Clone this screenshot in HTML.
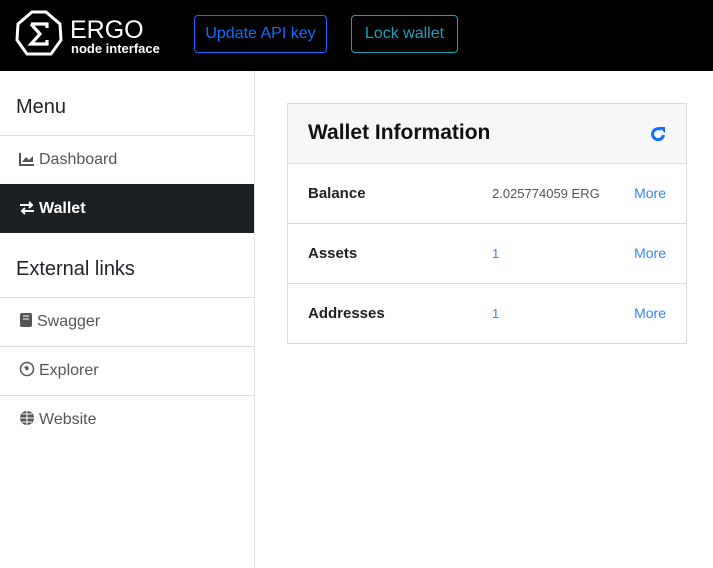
<!DOCTYPE html>
<html><head><style>
*{box-sizing:border-box;margin:0;padding:0}
body{width:713px;height:568px;overflow:hidden;font-family:"Liberation Sans",sans-serif;background:#fff;position:relative}
.hdr{position:absolute;left:0;top:0;width:713px;height:71px;background:#000}
.btn{position:absolute;top:15px;height:38px;border:1px solid;border-radius:4px;font-size:16px;line-height:36px;text-align:center}
.side{position:absolute;left:0;top:71px;width:255px;height:497px;border-right:1px solid #e5e5e5}
.h{position:absolute;left:16px;font-size:20px;color:#212529}
.it{position:absolute;left:0;width:254px;height:49px;border-top:1px solid #dedede;font-size:16px;color:#555;line-height:48px;padding-left:19px}
.it svg{vertical-align:-2px;margin-right:4px}
.card{position:absolute;left:287px;top:103px;width:400px;height:241px;border:1px solid #dcdcdc}
.ch{height:60px;background:#f7f7f7;border-bottom:1px solid #dcdcdc;font-size:21px;font-weight:bold;line-height:58px;padding-left:20px;color:#111;position:relative}
.row{height:60px;border-bottom:1px solid #dcdcdc;position:relative;font-size:16px;line-height:59px;color:#222}
.row:last-child{border-bottom:none}
.row .l{position:absolute;left:20px;font-weight:bold;font-size:15px}
.row .v{position:absolute;left:204px;font-size:13px;color:#555}
.row .m{position:absolute;right:20px;font-size:14px;color:#3b82f6}
</style></head><body>
<div class="hdr">
<svg style="position:absolute;left:15px;top:10px" width="48" height="48" viewBox="0 0 48 48"><polygon points="17,2 31,2 45,14 46,30 36,44 12,44 2,30 3,14" fill="none" stroke="#fff" stroke-width="3"/><path d="M16 14h16v4M16 14l9 10-9 10h16v-4" fill="none" stroke="#fff" stroke-width="3.2"/></svg>
<div style="position:absolute;left:70px;top:17px;color:#fff;font-size:25px;line-height:26px">ERGO</div>
<div style="position:absolute;left:71px;top:42px;color:#fff;font-size:13px;font-weight:bold;line-height:14px">node interface</div>
<div class="btn" style="left:194px;width:133px;border-color:#0d6efd;color:#0d6efd">Update API key</div>
<div class="btn" style="left:351px;width:107px;border-color:#17a2b8;color:#17a2b8">Lock wallet</div>
</div>
<div class="side">
<div class="h" style="top:25px">Menu</div>
<div class="it" style="top:64px"><svg width="16" height="14" viewBox="0 0 16 14"><path d="M1 1v12h14" stroke="#555" stroke-width="2" fill="none"/><path d="M3 10l4-5 3 3 4-4v6H3z" fill="#555"/></svg>Dashboard</div>
<div class="it" style="top:113px;background:#1d2023;color:#fff;border-top-color:#1d2023;font-weight:bold"><svg width="16" height="14" viewBox="0 0 16 14"><path d="M1 4h12M10 1l3 3-3 3M15 10H3M6 7l-3 3 3 3" stroke="#fff" stroke-width="2" fill="none"/></svg>Wallet</div>
<div class="h" style="top:187px">External links</div>
<div class="it" style="top:226px"><svg width="14" height="16" viewBox="0 0 14 16"><rect x="1" y="1" width="12" height="14" rx="2" fill="#555"/><path d="M4 4h6M4 7h6" stroke="#fff"/></svg>Swagger</div>
<div class="it" style="top:275px"><svg width="16" height="16" viewBox="0 0 16 16"><circle cx="8" cy="8" r="6.5" stroke="#555" stroke-width="1.5" fill="none"/><path d="M5 6l3-1 2 2-2 3z" fill="#555"/></svg>Explorer</div>
<div class="it" style="top:324px"><svg width="16" height="16" viewBox="0 0 16 16"><circle cx="8" cy="8" r="7" fill="#555"/><path d="M1 8h14M8 1v14M3 4h10M3 12h10" stroke="#fff" stroke-width="1"/></svg>Website</div>
</div>
<div class="card">
<div class="ch">Wallet Information<svg style="position:absolute;right:20px;top:22px" width="16" height="16" viewBox="0 0 16 16"><path d="M13.5 9a5.5 5.5 0 1 1-2.5-5.5" stroke="#0d6efd" stroke-width="3" fill="none"/><path d="M9 1l6 0 0 6z" fill="#0d6efd"/></svg></div>
<div class="row"><span class="l">Balance</span><span class="v">2.025774059 ERG</span><span class="m">More</span></div>
<div class="row"><span class="l">Assets</span><span class="v" style="color:#3b82f6">1</span><span class="m">More</span></div>
<div class="row"><span class="l">Addresses</span><span class="v" style="color:#3b82f6">1</span><span class="m">More</span></div>
</div>
</body></html>
